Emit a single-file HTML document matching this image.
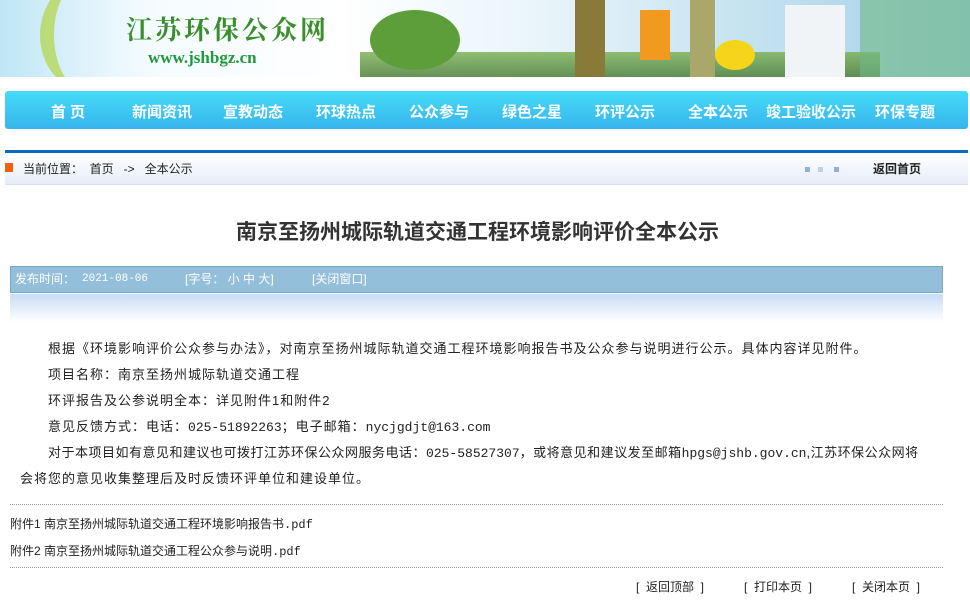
<!DOCTYPE html>
<html><head><meta charset="utf-8"><style>
*{margin:0;padding:0;box-sizing:border-box}
body{width:970px;height:605px;overflow:hidden;background:#fff;font-family:"Liberation Sans","Noto Sans CJK SC",sans-serif;font-size:13px;color:#222;position:relative}
.abs{position:absolute}
#banner{left:0;top:0;width:970px;height:77px;background:linear-gradient(90deg,#bfe6f5 0%,#f4fbff 15%,#ffffff 35%,#e9f5fb 55%,#c9e4f1 75%,#9fcfe6 100%);overflow:hidden}
#nav{left:5px;top:91px;width:963px;height:38px;border-radius:3px;background:linear-gradient(#45dcf8,#36b4ec);}
#nav span{position:absolute;top:10px;color:#fff;font-weight:bold;font-size:15px;letter-spacing:0}
#bline{left:5px;top:150px;width:963px;height:3px;background:#0a6ac1}
#crumb{left:5px;top:153px;width:963px;height:32px;background:linear-gradient(#fff,#e6ecf8);border-bottom:1px solid #d7deef}
.mono{font-family:"Liberation Mono","Noto Sans CJK SC",monospace;letter-spacing:0}
p.l{position:absolute;left:48px;font-size:13px;white-space:nowrap;letter-spacing:1px}
.dot{border-top:1px dotted #999;position:absolute;left:10px;width:933px;height:0}
.info{position:absolute;top:5px;color:#fff;font-size:12px;line-height:15px}
</style></head><body>
<div id="banner" class="abs">
 <div class="abs" style="left:40px;top:-20px;width:90px;height:110px;border-radius:50%;border-left:14px solid #b6d85a;opacity:.8"></div>
 <div class="abs" style="left:126px;top:10px;font-size:26px;font-weight:bold;color:#3a8f2c;letter-spacing:3px;font-family:'Noto Serif CJK SC',serif">江苏环保公众网</div>
 <div class="abs" style="left:148px;top:48px;font-size:17px;font-weight:bold;color:#1f9a3a;font-family:'Liberation Serif',serif">www.jshbgz.cn</div>
 <div class="abs" style="left:360px;top:52px;width:520px;height:25px;background:linear-gradient(#7fb35a,#4d7f3a);opacity:.85"></div>
 <div class="abs" style="left:370px;top:10px;width:90px;height:60px;border-radius:50%;background:#5d9e3a"></div>
 <div class="abs" style="left:575px;top:0;width:30px;height:77px;background:#8a7a3a"></div>
 <div class="abs" style="left:640px;top:10px;width:30px;height:50px;background:#f29a20"></div>
 <div class="abs" style="left:690px;top:0;width:25px;height:77px;background:#a9a86a"></div>
 <div class="abs" style="left:715px;top:40px;width:40px;height:30px;border-radius:50%;background:#f5d41c"></div>
 <div class="abs" style="left:785px;top:5px;width:60px;height:72px;background:#f1f4f6"></div>
 <div class="abs" style="left:860px;top:0;width:110px;height:77px;background:#6fb884;opacity:.6"></div>
</div>
<div id="nav" class="abs">
 <span style="left:46px">首 页</span><span style="left:127px">新闻资讯</span><span style="left:218px">宣教动态</span><span style="left:311px">环球热点</span><span style="left:404px">公众参与</span><span style="left:497px">绿色之星</span><span style="left:590px">环评公示</span><span style="left:683px">全本公示</span><span style="left:761px">竣工验收公示</span><span style="left:870px">环保专题</span>
</div>
<div id="bline" class="abs"></div>
<div id="crumb" class="abs">
 <div class="abs" style="left:0;top:10px;width:8px;height:9px;background:#f06010"></div>
 <div class="abs" style="left:18px;top:7px;font-size:12px">当前位置：&nbsp;&nbsp;首页&nbsp;&nbsp;&nbsp;-&gt;&nbsp;&nbsp;&nbsp;全本公示</div>
 <div class="abs" style="left:800px;top:14px;width:5px;height:5px;background:#8fb0d8"></div>
 <div class="abs" style="left:813px;top:14px;width:5px;height:5px;background:#c0d2ea"></div>
 <div class="abs" style="left:829px;top:14px;width:5px;height:5px;background:#8fb0d8"></div>
 <div class="abs" style="left:868px;top:7px;font-size:12px;font-weight:bold">返回首页</div>
</div>
<div class="abs" style="left:0;width:955px;top:216px;text-align:center;font-size:21px;font-weight:bold;color:#333">南京至扬州城际轨道交通工程环境影响评价全本公示</div>
<div class="abs" style="left:10px;top:266px;width:933px;height:27px;background:#93bfda;border:1px solid #74aac6">
 <span class="info" style="left:4px">发布时间：</span><span class="info mono" style="left:71px;font-size:11px">2021-08-06</span><span class="info" style="left:174px">[字号： 小 中 大]</span><span class="info" style="left:301px">[关闭窗口]</span>
</div>
<div class="abs" style="left:10px;top:294px;width:933px;height:28px;background:linear-gradient(#c8dcf5,#fff)"></div>
<p class="l" style="top:338px">根据《环境影响评价公众参与办法》，对南京至扬州城际轨道交通工程环境影响报告书及公众参与说明进行公示。具体内容详见附件。</p>
<p class="l" style="top:364px">项目名称：南京至扬州城际轨道交通工程</p>
<p class="l" style="top:390px">环评报告及公参说明全本：详见附件1和附件2</p>
<p class="l" style="top:416px">意见反馈方式：电话：<span class="mono">025-51892263</span>；电子邮箱：<span class="mono">nycjgdjt@163.com</span></p>
<p class="l" style="top:442px;letter-spacing:0.5px">对于本项目如有意见和建议也可拨打江苏环保公众网服务电话：<span class="mono">025-58527307</span>，或将意见和建议发至邮箱<span class="mono">hpgs@jshb.gov.cn</span>,江苏环保公众网将</p>
<p class="l" style="top:468px;left:20px">会将您的意见收集整理后及时反馈环评单位和建设单位。</p>
<div class="dot" style="top:504px"></div>
<div class="abs" style="left:10px;top:515px;font-size:12px">附件1 南京至扬州城际轨道交通工程环境影响报告书<span class="mono">.pdf</span></div>
<div class="abs" style="left:10px;top:542px;font-size:12px">附件2 南京至扬州城际轨道交通工程公众参与说明<span class="mono">.pdf</span></div>
<div class="dot" style="top:567px"></div>
<div class="abs" style="left:636px;top:578px;font-size:12px">[&nbsp; 返回顶部 &nbsp;]</div>
<div class="abs" style="left:744px;top:578px;font-size:12px">[&nbsp; 打印本页 &nbsp;]</div>
<div class="abs" style="left:852px;top:578px;font-size:12px">[&nbsp; 关闭本页 &nbsp;]</div>
</body></html>
